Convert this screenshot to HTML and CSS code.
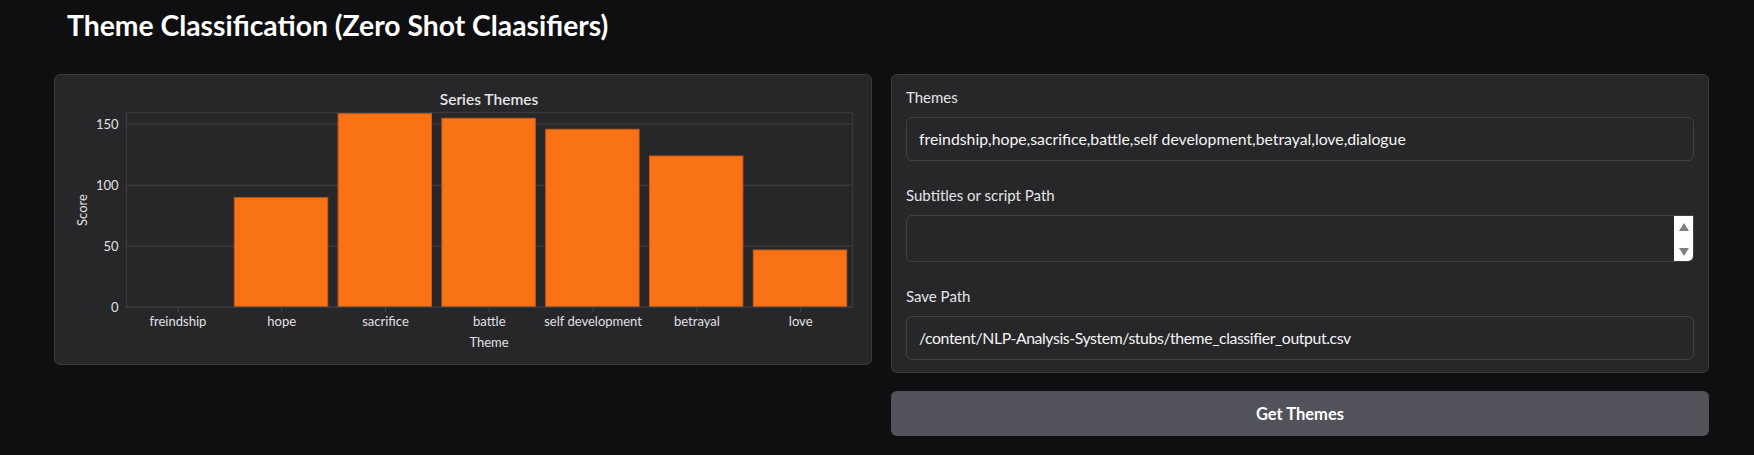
FILE: index.html
```html
<!DOCTYPE html>
<html lang="en">
<head>
<meta charset="utf-8">
<title>Theme Classification</title>
<link rel="stylesheet" href="styles.css">
</head>
<body>
<div class="page">
  <h1 class="title">Theme Classification (Zero Shot Claasifiers)</h1>
  <div class="row">
    <div class="panel chart-panel">
      <svg class="chart" width="816" height="289" viewBox="0 0 816 289" xmlns="http://www.w3.org/2000/svg">
        <text class="chart-title" x="434" y="29.5" text-anchor="middle">Series Themes</text>
        <g class="grid">
          <line x1="71" y1="49.3" x2="797.7" y2="49.3"/>
          <line x1="71" y1="110.3" x2="797.7" y2="110.3"/>
          <line x1="71" y1="171.3" x2="797.7" y2="171.3"/>
        </g>
        <rect class="plot-frame" x="71.5" y="37.5" width="726" height="194.8"/>
        <g class="bars">
          <rect x="179.3" y="122.7" width="93.4" height="109.6"/>
          <rect x="283.1" y="38.7" width="93.4" height="193.6"/>
          <rect x="386.9" y="43.3" width="93.4" height="189"/>
          <rect x="490.7" y="54.3" width="93.4" height="178"/>
          <rect x="594.5" y="81" width="93.4" height="151.3"/>
          <rect x="698.3" y="175" width="93.4" height="57.3"/>
        </g>
        <line class="zero" x1="71" y1="232.3" x2="797.7" y2="232.3"/>
        <g class="ticks">
          <line x1="122.9" y1="232.3" x2="122.9" y2="237"/>
          <line x1="226.7" y1="232.3" x2="226.7" y2="237"/>
          <line x1="330.5" y1="232.3" x2="330.5" y2="237"/>
          <line x1="434.3" y1="232.3" x2="434.3" y2="237"/>
          <line x1="538.1" y1="232.3" x2="538.1" y2="237"/>
          <line x1="641.9" y1="232.3" x2="641.9" y2="237"/>
          <line x1="745.7" y1="232.3" x2="745.7" y2="237"/>
        </g>
        <g class="tick-label" text-anchor="middle">
          <text x="122.9" y="250.5">freindship</text>
          <text x="226.7" y="250.5">hope</text>
          <text x="330.5" y="250.5">sacrifice</text>
          <text x="434.3" y="250.5">battle</text>
          <text x="538.1" y="250.5">self development</text>
          <text x="641.9" y="250.5">betrayal</text>
          <text x="745.7" y="250.5">love</text>
        </g>
        <g class="tick-label" text-anchor="end">
          <text x="63.5" y="53.8">150</text>
          <text x="63.5" y="114.8">100</text>
          <text x="63.5" y="175.8">50</text>
          <text x="63.5" y="236.8">0</text>
        </g>
        <text class="axis-title" x="434" y="272.3" text-anchor="middle">Theme</text>
        <text class="axis-title" x="0" y="0" text-anchor="middle" transform="translate(32 135) rotate(-90)">Score</text>
      </svg>
    </div>
    <div class="side">
      <div class="panel form-panel">
        <div class="field">
          <div class="label">Themes</div>
          <div class="input">freindship,hope,sacrifice,battle,self development,betrayal,love,dialogue</div>
        </div>
        <div class="field">
          <div class="label">Subtitles or script Path</div>
          <div class="input textarea">
            <div class="scrollbar">
              <span class="arrow up"></span>
              <span class="arrow down"></span>
            </div>
          </div>
        </div>
        <div class="field">
          <div class="label">Save Path</div>
          <div class="input path">/content/NLP-Analysis-System/stubs/theme_classifier_output.csv</div>
        </div>
      </div>
      <button class="btn">Get Themes</button>
    </div>
  </div>
</div>
</body>
</html>
```

FILE: styles.css
```css
html, body {
  margin: 0;
  padding: 0;
  background: #0f0f11;
}

body {
  width: 1754px;
  height: 455px;
  overflow: hidden;
  font-family: Lato, "Liberation Sans", sans-serif;
  color: #e4e4e7;
}

.page {
  padding: 0 45px 0 54px;
}

.title {
  margin: 0 0 31px 13px;
  padding-top: 7px;
  font-size: 28.3px;
  line-height: 36px;
  font-weight: 700;
  color: #ffffff;
}

.row {
  display: flex;
  gap: 19px;
  align-items: flex-start;
}

.panel {
  background: #27272a;
  border: 1px solid #3a3a3f;
  border-radius: 6px;
  box-sizing: border-box;
}

.chart-panel {
  width: 818px;
  height: 291px;
}

.chart {
  display: block;
}

.chart-title {
  font-size: 15.5px;
  fill: #e4e4e7;
  font-weight: 600;
}

.grid line {
  stroke: #38383d;
  stroke-width: 1.6;
}

.plot-frame {
  fill: none;
  stroke: #38383d;
  stroke-width: 1.4;
}

.bars rect {
  fill: #f97316;
  stroke: #c85d12;
  stroke-width: 1;
}

.zero {
  stroke: #3c3c42;
  stroke-width: 1.4;
}

.ticks line {
  stroke: #44444a;
  stroke-width: 1;
}

.tick-label text {
  font-size: 13px;
  fill: #e0e0e4;
}

.axis-title {
  font-size: 13px;
  fill: #e0e0e4;
}

.side {
  width: 818px;
  display: flex;
  flex-direction: column;
  gap: 18px;
}

.form-panel {
  height: 299px;
  padding: 11px 14px 14px 14px;
  display: flex;
  flex-direction: column;
  gap: 23px;
}

.label {
  font-size: 15px;
  line-height: 22px;
  color: #e4e4e7;
  margin-bottom: 9px;
}

.input {
  height: 44px;
  box-sizing: border-box;
  border: 1px solid #3f3f46;
  border-radius: 6px;
  background: #27272a;
  padding: 0 12px;
  font-size: 15.8px;
  line-height: 42px;
  color: #f4f4f5;
  white-space: nowrap;
  overflow: hidden;
}

.path {
  letter-spacing: -0.4px;
}

.textarea {
  height: 47px;
  padding: 0;
  display: flex;
  justify-content: flex-end;
  border-radius: 6px 0 6px 6px;
}

.scrollbar {
  width: 19px;
  background: #ffffff;
  display: flex;
  flex-direction: column;
  justify-content: space-between;
  align-items: center;
  padding: 7px 0 5px;
  box-sizing: border-box;
}

.arrow {
  width: 0;
  height: 0;
  border-left: 5.5px solid transparent;
  border-right: 5.5px solid transparent;
}

.arrow.up {
  border-bottom: 8px solid #808080;
}

.arrow.down {
  border-top: 8px solid #808080;
}

.btn {
  height: 45px;
  width: 100%;
  border: none;
  border-radius: 6px;
  background: #52525b;
  color: #ffffff;
  font-family: Lato, "Liberation Sans", sans-serif;
  font-size: 16.5px;
  font-weight: 700;
  cursor: pointer;
}
```
